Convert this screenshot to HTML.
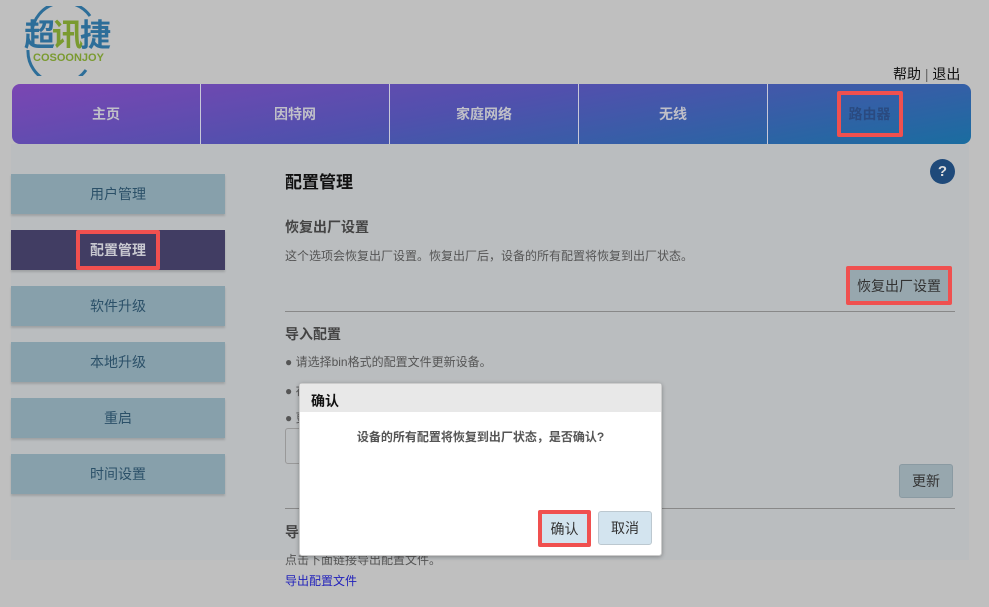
<!DOCTYPE html>
<html><head><meta charset="utf-8"><style>
*{margin:0;padding:0;box-sizing:border-box}
body{width:989px;height:607px;background:#bfbfbf;font-family:"Liberation Sans","Noto Sans CJK SC",sans-serif;position:relative;overflow:hidden;font-size:13px;color:#333}
.abs{position:absolute}
.nav{left:12px;top:84px;width:959px;height:60px;border-radius:8px;background:linear-gradient(170deg,#7b46b3,#5150ad 45%,#1a6da0);display:flex}
.nav div{width:189px;color:#c0c0c8;font-weight:bold;font-size:14px;display:flex;align-items:center;justify-content:center;border-right:1px solid #c8c8d8}
.nav div:last-child{border:none;width:203px}
.panel{left:11px;top:144px;width:958px;height:416px;background:#babdbf}
.side{left:11px;width:214px;height:40px;background:#87a0ab;color:#2b5068;font-size:14px;display:flex;align-items:center;justify-content:center;box-shadow:0 2px 2px rgba(0,0,0,.15)}
.btn{background:#97a7ae;border:1px solid #8a9aa2;border-radius:3px;color:#333;font-size:14px;display:flex;align-items:center;justify-content:center}
.red{border:4px solid #f0504f !important;border-radius:2px}
</style></head><body>
<div class="abs" style="left:22px;top:6px;width:90px;height:70px">
<svg width="90" height="70" class="abs" style="left:0;top:0"><path d="M10 26 A32 32 0 0 1 68 10" fill="none" stroke="#2d6e99" stroke-width="3"/><path d="M6 44 A32 32 0 0 0 64 64" fill="none" stroke="#2d6e99" stroke-width="3"/></svg>
<div class="abs" style="left:2px;top:12px;font-size:31px;line-height:36px;font-weight:bold;color:#2d6e99;letter-spacing:-3px">超<span style="color:#7a9a30">讯</span>捷</div>
<div class="abs" style="left:11px;top:46px;font-size:11px;font-weight:bold;color:#7a9a30">COSOONJOY</div>
</div>
<div class="abs" style="left:893px;top:64px;font-size:14px;color:#111">帮助 <span style="color:#666">|</span> 退出</div>
<div class="abs nav"><div>主页</div><div>因特网</div><div>家庭网络</div><div>无线</div><div><span class="red" style="padding:9px 8px;color:#2a4a80">路由器</span></div></div>
<div class="abs panel"></div>
<div class="abs side" style="top:174px">用户管理</div>
<div class="abs side" style="top:230px;background:#413d63;color:#c8c8d0;font-weight:bold"><span class="red" style="padding:6px 10px">配置管理</span></div>
<div class="abs side" style="top:286px">软件升级</div>
<div class="abs side" style="top:342px">本地升级</div>
<div class="abs side" style="top:398px">重启</div>
<div class="abs side" style="top:454px">时间设置</div>
<div class="abs" style="left:285px;top:168px;font-size:17px;font-weight:bold;color:#111">配置管理</div>
<div class="abs" style="left:930px;top:159px;width:25px;height:25px;border-radius:50%;background:#1f4a7a;color:#ddd;font-weight:bold;font-size:15px;text-align:center;line-height:25px">?</div>
<div class="abs" style="left:285px;top:217px;font-size:14px;font-weight:bold;color:#444">恢复出厂设置</div>
<div class="abs" style="left:285px;top:247px;font-size:12px;color:#555">这个选项会恢复出厂设置。恢复出厂后，设备的所有配置将恢复到出厂状态。</div>
<div class="abs btn red" style="left:846px;top:266px;width:106px;height:39px">恢复出厂设置</div>
<div class="abs" style="left:285px;top:311px;width:670px;height:1px;background:#888"></div>
<div class="abs" style="left:285px;top:324px;font-size:14px;font-weight:bold;color:#444">导入配置</div>
<div class="abs" style="left:285px;top:353px;font-size:12px;color:#555">● 请选择bin格式的配置文件更新设备。</div>
<div class="abs" style="left:285px;top:382px;font-size:12px;color:#555">● 在</div>
<div class="abs" style="left:285px;top:409px;font-size:12px;color:#555">● 更</div>
<div class="abs" style="left:285px;top:428px;width:30px;height:36px;border:1px solid #999;border-radius:3px"></div>
<div class="abs btn" style="left:899px;top:464px;width:54px;height:34px">更新</div>
<div class="abs" style="left:285px;top:508px;width:670px;height:1px;background:#888"></div>
<div class="abs" style="left:285px;top:522px;font-size:14px;font-weight:bold;color:#444">导</div>
<div class="abs" style="left:285px;top:551px;font-size:12px;color:#555">点击下面链接导出配置文件。</div>
<div class="abs" style="left:285px;top:572px;font-size:12px;color:#2222bb">导出配置文件</div>
<div class="abs" style="left:299px;top:383px;width:363px;height:173px;background:#fff;border:1px solid #ccc;border-radius:3px;box-shadow:0 1px 4px rgba(0,0,0,.3)">
<div style="height:28px;background:#e8e8e8;font-weight:bold;font-size:14px;color:#111;padding:7px 11px">确认</div>
<div style="text-align:center;margin-top:16px;font-size:12px;color:#555;font-weight:bold">设备的所有配置将恢复到出厂状态，是否确认?</div>
<div class="abs btn red" style="left:238px;top:126px;width:53px;height:37px;background:#d3e4ef">确认</div>
<div class="abs btn" style="left:298px;top:127px;width:54px;height:34px;background:#d3e4ef;border-color:#bcc8d0">取消</div>
</div>
</body></html>
